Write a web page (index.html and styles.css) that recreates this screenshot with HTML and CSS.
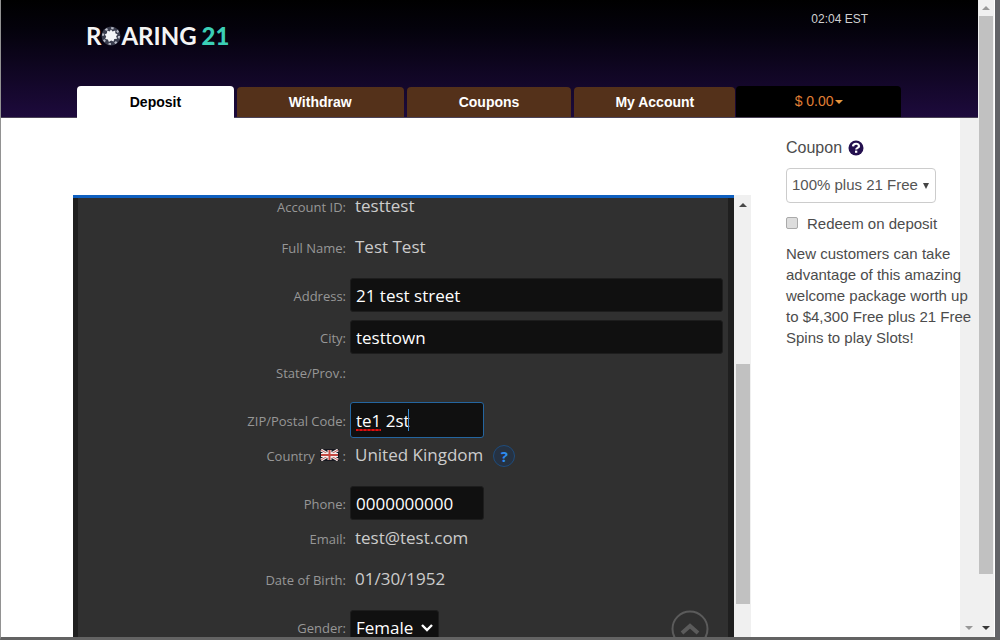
FILE: index.html
```html
<!DOCTYPE html>
<html lang="en">
<head>
<meta charset="utf-8">
<title>Roaring 21 - Deposit</title>
<link rel="stylesheet" href="styles.css">
</head>
<body>
<div class="window">
  <div class="page">
    <header class="header">
      <div class="brand-row">
        <a class="logo" href="#" aria-label="Roaring 21">
          <span>R</span>
          <svg class="chip" viewBox="0 0 20 20" aria-hidden="true">
            <circle cx="10" cy="10" r="9.500" fill="#3a3d4e"/>
            <circle cx="10" cy="10" r="8" fill="none" stroke="#b9bcc8" stroke-width="2" stroke-dasharray="2.4 3.883"/>
            <path d="M10 3.500l1.500 2 2.800-1 0 2.800 2.300 1.100-1.500 1.800 1 2.500-2.800.4-.8 2.500-2.400-1-2.200 1.300-1-2.500-2.700-.4 1-2.400-1.400-2.200L6 7.300 6.200 4.600l2.400.8z" fill="#f4f5f8"/>
          </svg>
          <span>ARING</span>
          <span class="logo-number">21</span>
        </a>
        <time class="clock">02:04 EST</time>
      </div>
      <nav class="tabs">
        <a class="tab active" href="#">Deposit</a>
        <a class="tab withdraw" href="#">Withdraw</a>
        <a class="tab" href="#">Coupons</a>
        <a class="tab account" href="#">My Account</a>
        <button class="balance" type="button">$ 0.00<span class="caret"></span></button>
      </nav>
    </header>
    <div class="body">
      <main class="cashier">
        <form class="panel">
          <div class="fields">
            <div class="row text"><span class="label">Account ID:</span><span class="value">testtest</span></div>
            <div class="row text"><span class="label">Full Name:</span><span class="value">Test Test</span></div>
            <div class="row"><label class="label" for="address">Address:</label><input class="input" id="address" type="text" value="21 test street"></div>
            <div class="row"><label class="label" for="city">City:</label><input class="input" id="city" type="text" value="testtown"></div>
            <div class="row text"><span class="label">State/Prov.:</span><span class="value"></span></div>
            <div class="row"><label class="label" for="zip">ZIP/Postal Code:</label>
              <div class="short focus-wrap"><input class="input focused" id="zip" type="text" value="te1 2st"><span class="misspell"></span><span class="text-caret"></span></div></div>
            <div class="row text"><span class="label">Country
              <svg class="flag" viewBox="0 0 19 12" aria-hidden="true">
                <rect width="19" height="12" fill="#17171f"/>
                <path d="M1 1l17 10M18 1L1 11" stroke="#f0e9e9" stroke-width="3"/>
                <path d="M1 1l17 10M18 1L1 11" stroke="#c46461" stroke-width="1"/>
                <path d="M9.500 1v10M1 6h17" stroke="#f3eeee" stroke-width="4"/>
                <path d="M9.500 1v10M1 6h17" stroke="#c34741" stroke-width="2"/>
              </svg>
              :</span><span class="value">United Kingdom<button class="help" type="button" aria-label="Country help">?</button></span></div>
            <div class="row"><label class="label" for="phone">Phone:</label><input class="input short" id="phone" type="text" value="0000000000"></div>
            <div class="row text"><span class="label">Email:</span><span class="value">test@test.com</span></div>
            <div class="row text"><span class="label">Date of Birth:</span><span class="value">01/30/1952</span></div>
            <div class="row"><label class="label" for="gender">Gender:</label>
              <div class="gender-wrap">
                <select class="input gender" id="gender"><option>Female</option><option>Male</option></select>
                <svg class="chevron" viewBox="0 0 12 8" aria-hidden="true"><path d="M1 1l5 5 5-5" fill="none" stroke="#fff" stroke-width="2.400"/></svg>
              </div></div>
          </div>
          <button class="to-top" type="button" aria-label="Back to top">
            <svg viewBox="0 0 38 38" aria-hidden="true"><circle cx="19" cy="19" r="17.500" fill="none" stroke="#5b5b5b" stroke-width="2"/><path d="M11 23l8-7 8 7" fill="none" stroke="#5b5b5b" stroke-width="4"/></svg>
          </button>
        </form>
        <div class="scrollbar inner">
          <span class="arrow up"></span>
          <span class="gap-before"></span><span class="thumb"></span><span class="gap-after"></span>
        </div>
      </main>
      <aside class="coupon">
        <div class="coupon-title"><label for="coupon">Coupon</label>
          <svg class="coupon-help" viewBox="0 0 16 16" aria-hidden="true"><circle cx="8" cy="8" r="7.500" fill="#24104f"/><path d="M5 6.400C5.200 2.800 11 3 11 6.200 11 8 8.200 7.700 8.200 9.400" fill="none" stroke="#fff" stroke-width="2.200"/><rect x="7" y="10.600" width="2.300" height="2.200" fill="#fff"/></svg>
        </div>
        <div class="select-wrap">
          <select class="coupon-select" id="coupon"><option>100% plus 21 Free</option></select>
          <span class="select-arrow"></span>
        </div>
        <label class="redeem"><input class="check" type="checkbox">Redeem on deposit</label>
        <p class="note">New customers can take advantage of this amazing welcome package worth up to $4,300 Free plus 21 Free Spins to play Slots!</p>
      </aside>
      <div class="scrollbar track"><span class="arrow down dim"></span></div>
    </div>
  </div>
  <div class="scrollbar outer">
    <span class="arrow up dim"></span><span class="thumb"></span><span class="gap-after"></span><span class="arrow down"></span>
  </div>
</div>
</body>
</html>
```

FILE: styles.css
```css
* { box-sizing: border-box; }
body {
  margin: 0;
  height: 100vh;
  overflow: hidden;
  font-family: "Liberation Sans", Arial, sans-serif;
  background: #606060;
}
a { text-decoration: none; color: inherit; }
button, input, select { font: inherit; margin: 0; }

.window {
  display: flex;
  height: 100vh;
  border-left: 1px solid #929292;
  border-right: 5px solid #626367;
  border-bottom: 3px solid #636363;
  background: #fff;
}
.page { flex: 1; min-width: 0; display: flex; flex-direction: column; }

.header {
  display: flex;
  flex-direction: column;
  height: 118px;
  padding-left: 76px;
  background: linear-gradient(#000 0, #04020c 30px, #1d0a3c 100%);
  border-bottom: 1px solid #4a4257;
}
.brand-row {
  flex: 1;
  display: flex;
  justify-content: space-between;
  width: 100%;
  padding: 12px 110px 0 9px;
}
.logo {
  display: flex;
  align-items: center;
  height: 48px;
  color: #f4f4f4;
  font: bold 24px/48px Lato, sans-serif;
}
.chip { width: 20px; height: 20px; }
.logo-number { color: #3bcfb6; font-weight: 900; margin-left: 5px; }
.clock { color: #d0d0d0; font-size: 12px; line-height: 14px; }

.tabs { display: flex; align-items: flex-end; gap: 3px; max-width: 824px; }
.tab, .balance {
  height: 30px;
  border-radius: 4px 4px 0 0;
  text-align: center;
  font-size: 14px;
  line-height: 30px;
}
.tab { flex: 165 1 0; background: #54311a; color: #fff; font-weight: bold; }
.withdraw { flex-grow: 167; }
.account { flex-grow: 161; }
.active {
  flex-grow: 157;
  height: 32px;
  margin-bottom: -1px;
  line-height: 32px;
  background: #fff;
  color: #000;
}
.balance {
  flex: 165 1 0;
  height: 31px;
  margin-left: -2px;
  padding: 0 0 2px;
  border: 0;
  background: #000;
  color: #e07f35;
}
.caret {
  display: inline-block;
  vertical-align: middle;
  margin-left: 1px;
  border: 4px solid transparent;
  border-top-color: #e8973f;
  border-bottom: 0;
}

.body { flex: 1; min-height: 0; display: flex; }
.cashier { flex: 1; min-width: 0; display: flex; padding: 77px 0 0 72px; }
.panel {
  position: relative;
  flex: 1;
  min-width: 0;
  overflow: hidden;
  border-top: 3px solid #0f60c0;
  background: #1f1f1f;
  padding: 0 6px 0 5px;
  font-family: "Open Sans", "Noto Sans", sans-serif;
}
.fields { margin-top: -6px; padding-right: 5px; background: #303030; }
.row {
  display: grid;
  grid-template-columns: 268px 1fr;
  column-gap: 4px;
  align-items: center;
  height: 42px;
}
.row.text { height: 41px; padding-bottom: 13px; }
.label {
  text-align: right;
  color: #979797;
  font-size: 13px;
  line-height: 20px;
  padding-top: 2px;
}
.value {
  display: flex;
  align-items: center;
  padding-left: 5px;
  height: 28px;
  color: #ccc;
  font-size: 17px;
  line-height: 28px;
}
.input {
  width: 100%;
  height: 34px;
  padding: 0 5px;
  border: 1px solid #1d1d1d;
  border-radius: 3px;
  background: #101010;
  color: #fff;
  font-size: 17px;
  outline: 0;
}
.short { width: 134px; }
.focus-wrap, .gender-wrap, .select-wrap { position: relative; }
.focused { height: 36px; border-color: #24659f; }
.text-caret {
  position: absolute;
  left: 58px;
  top: 7px;
  width: 1px;
  height: 22px;
  background: #3a8fd6;
}
.misspell {
  position: absolute;
  left: 6px;
  top: 27px;
  width: 25px;
  height: 2px;
  background: repeating-linear-gradient(90deg, #e01010 0 2px, #a00c0c 2px 4px);
}
.flag { width: 19px; height: 12px; margin: 0 0 0 2px; }
.help {
  width: 22px;
  height: 22px;
  margin: 2px 0 0 10px;
  padding: 0;
  border: 1px solid #1f4c7c;
  border-radius: 50%;
  background: #263242;
  color: #2d8cf0;
  font: bold 15px/20px "Open Sans", sans-serif;
}
.gender-wrap { width: 89px; }
.gender { appearance: none; }
.chevron {
  position: absolute;
  right: 6px;
  top: 14px;
  width: 12px;
  height: 8px;
  pointer-events: none;
}
.to-top {
  position: absolute;
  right: 25px;
  bottom: -11px;
  width: 38px;
  height: 38px;
  padding: 0;
  border: 0;
  background: none;
}
.to-top svg { display: block; }

.scrollbar {
  display: flex;
  flex-direction: column;
  align-items: center;
  background: #f0f0f0;
}
.arrow { border: 4px solid transparent; }
.up { border-bottom-color: #484848; border-top: 0; }
.down { border-top-color: #383838; border-bottom: 0; margin-top: auto; }
.up.dim { border-bottom-color: #989898; }
.down.dim { border-top-color: #989898; }
.thumb { width: 14px; background: #c1c1c1; }
.inner { width: 17px; padding-top: 8px; }
.inner .gap-before { flex: 157; }
.inner .thumb { flex: 240; }
.inner .gap-after { flex: 33; }
.track { width: 18px; padding-bottom: 7px; }
.outer { width: 17px; padding: 6px 0 7px; border-right: 1px solid #fff; }
.outer .thumb { flex: 558; margin-top: 6px; }
.outer .gap-after { flex: 52; }

.coupon {
  width: 209px;
  padding: 20px 0 0 35px;
  color: #4c4c4c;
  font-size: 15px;
}
.coupon-title {
  display: flex;
  align-items: center;
  gap: 6px;
  height: 20px;
  font-size: 16px;
}
.coupon-help { width: 16px; height: 16px; }
.select-wrap { width: 150px; margin-top: 10px; }
.coupon-select {
  appearance: none;
  width: 100%;
  height: 35px;
  padding: 0 5px 2px;
  border: 1px solid #ccc;
  border-radius: 4px;
  background: #fff;
  color: #555;
  font-size: 15px;
}
.select-arrow {
  position: absolute;
  right: 7px;
  top: 15px;
  border: 3px solid transparent;
  border-top: 6px solid #444;
  border-bottom: 0;
  pointer-events: none;
}
.redeem {
  display: flex;
  align-items: center;
  gap: 9px;
  height: 20px;
  margin-top: 10px;
  white-space: nowrap;
}
.check {
  appearance: none;
  width: 12px;
  height: 12px;
  border: 1px solid #aaa;
  border-radius: 2px;
  background: #ddd;
}
.note {
  position: relative;
  z-index: 1;
  width: 190px;
  margin: 10px 0 0;
  line-height: 21px;
}
```
